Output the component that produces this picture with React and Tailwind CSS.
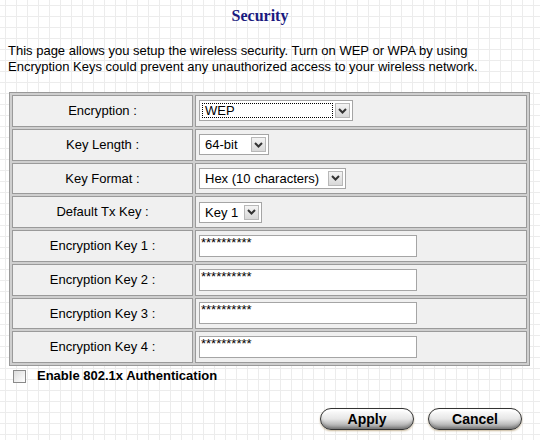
const ROWS = [
  { label: "Encryption :", kind: "select", value: "WEP", width: "w-[154px]", focus: true },
  { label: "Key Length :", kind: "select", value: "64-bit", width: "w-[70px]" },
  { label: "Key Format :", kind: "select", value: "Hex (10 characters)", width: "w-[147px]" },
  { label: "Default Tx Key :", kind: "select", value: "Key 1", width: "w-[63px]" },
  { label: "Encryption Key 1 :", kind: "input" },
  { label: "Encryption Key 2 :", kind: "input" },
  { label: "Encryption Key 3 :", kind: "input" },
  { label: "Encryption Key 4 :", kind: "input" },
];

function FakeSelect({ value, width, focus }) {
  return (
    <div className={`${width} h-[21px] flex items-stretch border border-[#a5a5a5] bg-white p-[2px]`}>
      <div
        className={`flex-1 flex items-center pl-[2px] text-[13px] leading-none ${
          focus ? "border border-dotted border-black" : "border border-transparent"
        }`}
      >
        {value}
      </div>
      <div className="w-[15px] ml-[2px] flex items-center justify-center border border-[#b8b8b8] bg-linear-to-b from-[#f4f4f4] to-[#d8d8d8]">
        <svg width="9" height="6" viewBox="0 0 9 6">
          <path d="M1 1 L4.5 4.5 L8 1" fill="none" stroke="#333" strokeWidth="2" />
        </svg>
      </div>
    </div>
  );
}

function KeyInput() {
  return (
    <div className="w-[218px] h-[22px] border border-[#a5a5a5] bg-white pl-[1px] text-[13px] leading-[13px] overflow-hidden">
      **********
    </div>
  );
}

function PillButton({ children }) {
  return (
    <button className="w-[94px] h-[22px] rounded-full border border-[#333] bg-linear-to-b from-white via-[#e6e6e6] to-[#9a9a9a] shadow-[0_1px_2px_#c8b89a,inset_0_-2px_3px_rgba(0,0,0,0.25),inset_0_2px_2px_white] text-[14px] font-bold text-black leading-none">
      {children}
    </button>
  );
}

export default function App() {
  return (
    <div
      className="w-[540px] h-[440px] overflow-hidden bg-white bg-[linear-gradient(to_right,#ececec_1px,transparent_1px),linear-gradient(to_bottom,#ececec_1px,transparent_1px)] bg-[size:11px_11px] bg-[position:5px_5px]"
      style={{ fontFamily: '"Liberation Sans", Arial, sans-serif' }}
    >
      <div
        className="pt-[6px] pr-[20px] text-center text-[16px] font-bold text-[#1a1a80] leading-[20px]"
        style={{ fontFamily: '"Liberation Serif", "Times New Roman", serif' }}
      >
        Security
      </div>

      <p className="mt-[17px] pl-[8px] text-[13px] leading-[16px] text-black">
        This page allows you setup the wireless security. Turn on WEP or WPA by using
        <br />
        Encryption Keys could prevent any unauthorized access to your wireless network.
      </p>

      <div className="mt-[17px] pl-[9px]">
        <table className="w-[521px] border-separate border-spacing-[2px] border border-[#999] bg-[#cfcfcf]">
          <tbody>
            {ROWS.map((row) => (
              <tr key={row.label} className="h-[31.75px]">
                <td className="w-[181px] border border-[#9a9a9a] bg-[#f0f0f0] text-center text-[13px] text-black p-0">
                  {row.label}
                </td>
                <td className="border border-[#9a9a9a] bg-[#f0f0f0] pl-[3px] p-0">
                  {row.kind === "select" ? (
                    <FakeSelect value={row.value} width={row.width} focus={row.focus} />
                  ) : (
                    <KeyInput />
                  )}
                </td>
              </tr>
            ))}
          </tbody>
        </table>
      </div>

      <div className="mt-[2px] pl-[13px] flex items-center gap-[11px] h-[16px]">
        <div className="w-[13px] h-[13px] border border-[#8a8a8a] bg-linear-to-br from-[#dcdcdc] to-white" />
        <span className="text-[13px] font-bold text-black leading-[16px]">Enable 802.1x Authentication</span>
      </div>

      <div className="mt-[24px] pl-[320px] flex gap-[14px]">
        <PillButton>Apply</PillButton>
        <PillButton>Cancel</PillButton>
      </div>
    </div>
  );
}
